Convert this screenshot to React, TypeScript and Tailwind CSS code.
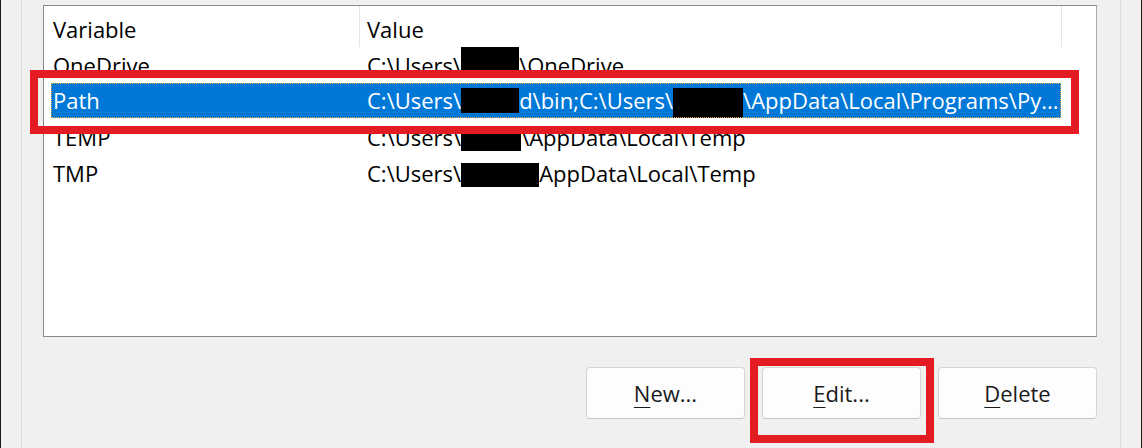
import React from "react"

type Part = { text?: string; redact?: string }

type Row = { name: string; parts: Part[]; selected?: boolean }

const rows: Row[] = [
  {
    name: "OneDrive",
    parts: [
      { text: "C:\\Users\\" },
      { redact: "w-[58px] h-[26px] mt-[0px]" },
      { text: "\\OneDrive" },
    ],
  },
  {
    name: "Path",
    selected: true,
    parts: [
      { text: "C:\\Users\\" },
      { redact: "w-[58px] h-[25px] mt-[5px]" },
      { text: "d\\bin;C:\\Users\\" },
      { redact: "w-[70px] h-[30px] mt-[5px]" },
      { text: "\\AppData\\Local\\Programs\\Py..." },
    ],
  },
  {
    name: "TEMP",
    parts: [
      { text: "C:\\Users\\" },
      { redact: "w-[60px] h-[21px] mt-[11px]" },
      { text: "\\AppData\\Local\\Temp" },
    ],
  },
  {
    name: "TMP",
    parts: [
      { text: "C:\\Users\\" },
      { redact: "w-[78px] h-[24px] mt-[8px]" },
      { text: "AppData\\Local\\Temp" },
    ],
  },
]

const ValueCell = ({ parts }: { parts: Part[] }) => {
  return (
    <div className="flex h-full items-center overflow-hidden whitespace-nowrap pl-[8px]">
      {parts.map((part, i) =>
        part.redact ? (
          <span key={i} className={`shrink-0 self-start bg-black ${part.redact}`} />
        ) : (
          <span key={i}>{part.text}</span>
        )
      )}
    </div>
  )
}

const Button = ({ label, rest }: { label: string; rest: string }) => {
  return (
    <button className="flex h-[52px] w-[159px] items-center justify-center rounded-[4px] border border-[#d5d5d5] border-b-[#c4c4c4] bg-[#fdfdfd] text-[22px] text-[#1b1b1b]">
      <span className="underline decoration-1 underline-offset-[5px]">{label}</span>
      <span>{rest}</span>
    </button>
  )
}

export default function App() {
  return (
    <div className="relative flex h-[448px] w-[1142px] bg-[#f0f0f0] font-['Open_Sans',sans-serif] text-[22px] text-black">
      <div className="w-px bg-[#1c1c1c]" />
      <div className="w-[20px]" />
      <div className="w-px bg-[#dcdcdc]" />

      <div className="flex flex-1 flex-col pl-[21px] pr-[23px]">
        <div className="mt-[5px] h-[332px] border border-[#868a94] border-r-[#a4a8b0] bg-white">
          <div className="flex h-[41px] items-end">
            <div className="flex h-full w-[315px] items-center pl-[9px] pt-[6px]">Variable</div>
            <div className="flex h-full w-[702px] items-center border-l border-[#e5e5e5] pl-[7px] pt-[6px]">
              Value
            </div>
            <div className="h-full flex-1 border-l border-[#e5e5e5]" />
          </div>

          {rows.map((row) => (
            <div key={row.name} className="flex h-[36px] pl-[7px]">
              <div
                className={
                  row.selected
                    ? "flex h-[35px] w-[1010px] bg-[#0078d7] text-white outline outline-1 outline-dotted outline-[#e7a84d] -outline-offset-1"
                    : "flex h-[36px] w-[1010px]"
                }
              >
                <div className="flex h-full w-[308px] items-center pl-[2px]">{row.name}</div>
                <div className="h-full w-[702px]">
                  <ValueCell parts={row.parts} />
                </div>
              </div>
            </div>
          ))}
        </div>

        <div className="mt-[30px] flex justify-end gap-[17px]">
          <Button label="N" rest="ew..." />
          <Button label="E" rest="dit..." />
          <Button label="D" rest="elete" />
        </div>
      </div>

      <div className="w-px bg-[#dcdcdc]" />
      <div className="w-[20px]" />
      <div className="w-px bg-[#1c1c1c]" />

      {/* annotation boxes */}
      <div className="pointer-events-none absolute left-[30px] top-[70px] h-[64px] w-[1049px] border-[8px] border-[#e31c24]" />
      <div className="pointer-events-none absolute left-[750px] top-[358px] h-[85px] w-[184px] border-[8px] border-[#e31c24]" />
    </div>
  )
}
